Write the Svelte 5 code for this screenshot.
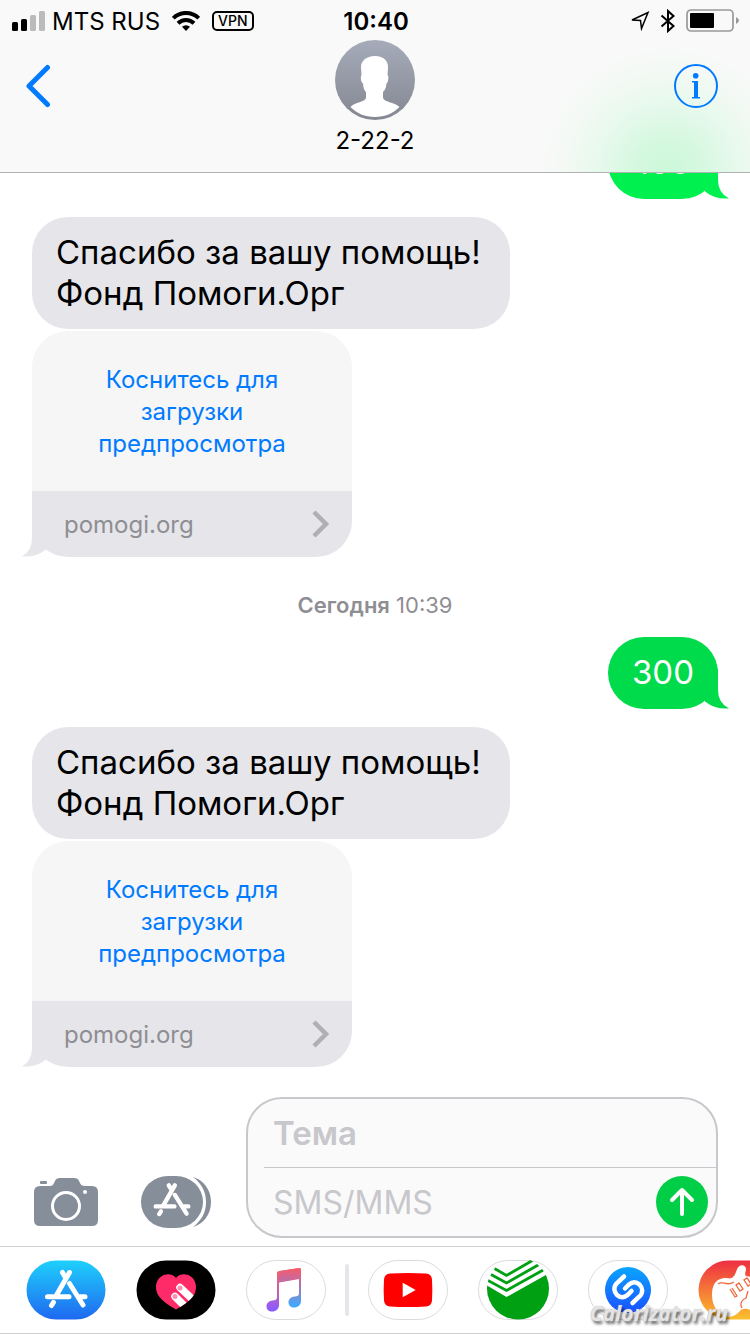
<script>
	const thread = [
		{ type: 'sent', text: '100', bright: true },
		{ type: 'received', text: 'Спасибо за вашу помощь! Фонд Помоги.Орг' },
		{ type: 'link', host: 'pomogi.org' },
		{ type: 'time', day: 'Сегодня', time: '10:39' },
		{ type: 'sent', text: '300' },
		{ type: 'received', text: 'Спасибо за вашу помощь! Фонд Помоги.Орг' },
		{ type: 'link', host: 'pomogi.org' }
	];

	let subject = $state('');
	let message = $state('');
</script>

{#snippet storeGlyph()}
	<g fill="none" stroke="#fff" stroke-width="5" stroke-linecap="round">
		<path d="M36.5 12.500l3 5M43.500 23.500L57 45M43.500 12.500L30 36M21.500 36.700H43M53 36.700h6M27.500 42.300L25.500 45.500" />
	</g>
{/snippet}

<div class="phone">
	<header>
		<div class="status">
			<div class="status-side">
				<svg width="34" height="20" viewBox="0 0 34 20" aria-hidden="true">
					<rect x="0" y="11" width="6" height="9" rx="1.500" />
					<rect x="9" y="8" width="6" height="12" rx="1.500" />
					<rect x="18" y="4" width="6" height="16" rx="1.500" fill="#bbb" />
					<rect x="27" y="0" width="6" height="20" rx="1.500" fill="#bbb" />
				</svg>
				<span class="carrier">MTS RUS</span>
				<svg width="28" height="20" viewBox="0 0 28 20" aria-hidden="true">
					<g fill="none" stroke="#000" stroke-width="4">
						<path d="M1.300 7.200a18 18 0 0 1 25.400 0" />
						<path d="M6 12.200a11.500 11.500 0 0 1 16 0" />
					</g>
					<path d="M14 20l-4-4.200a6 6 0 0 1 8 0z" />
				</svg>
				<span class="vpn">VPN</span>
			</div>
			<strong class="clock">10:40</strong>
			<div class="status-side right">
				<svg width="20" height="20" viewBox="0 0 20 20" aria-hidden="true">
					<path d="M2 9L18 1.500 11.500 17.500 10.500 9.500z" fill="none" stroke="#000" stroke-width="1.500" />
				</svg>
				<svg width="16" height="24" viewBox="0 0 16 24" aria-hidden="true">
					<path d="M1.500 6.500L13.500 17 8 22V2l5.500 5L1.500 17.500" fill="none" stroke="#000" stroke-width="2" />
				</svg>
				<svg width="54" height="24" viewBox="0 0 54 24" aria-hidden="true">
					<rect x="1" y="1" width="46" height="21" rx="4" fill="none" stroke="#999" stroke-width="1.700" />
					<rect x="4" y="4" width="24" height="15" rx="1" />
					<path d="M50 8q6 3.500 0 7z" fill="#999" />
				</svg>
			</div>
		</div>

		<div class="nav">
			<button class="icon-button" aria-label="Назад">
				<svg width="30" height="44" viewBox="0 0 30 44">
					<path d="M21.500 3.500L3 22 21.500 40.500" fill="none" stroke="#007aff" stroke-width="5" stroke-linecap="round" stroke-linejoin="round" />
				</svg>
			</button>
			<div class="contact">
				<svg width="80" height="80" viewBox="0 0 80 80" aria-hidden="true">
					<defs>
						<linearGradient id="avatar" x2="0" y2="1">
							<stop stop-color="#a5abb9" />
							<stop offset="1" stop-color="#858892" />
						</linearGradient>
					</defs>
					<circle cx="40" cy="40" r="40" fill="url(#avatar)" />
					<path
						d="M40 16C31 16 26 21 26 27L26.500 35C25.500 36 25.500 42 28 43.500C28.500 48 29 50 31 52V58C30 62 20 62 15.500 67C22 73.500 30 77 40 77S58 73.500 64.500 67C59 62 49 62 48 58V52C50 50 51 48 51.500 43.500C53.500 42 54 36 52.500 35L53 27C53 21 49 16 40 16z"
						fill="#fff"
					/>
				</svg>
				<span class="name">2-22-2</span>
			</div>
			<button class="icon-button" aria-label="Сведения">
				<svg width="44" height="44" viewBox="0 0 44 44">
					<circle cx="22" cy="22" r="21" fill="none" stroke="#007aff" stroke-width="2" />
					<circle cx="21.700" cy="11.800" r="2.800" fill="#007aff" />
					<path d="M18 17h6v16h2v1.500h-8V33h2V18.500h-2z" fill="#007aff" />
				</svg>
			</button>
		</div>
	</header>

	<main>
		{#each thread as item}
			{#if item.type === 'time'}
				<p class="time"><strong>{item.day}</strong> {item.time}</p>
			{:else if item.type === 'link'}
				<a class="card" href="https://pomogi.org">
					<span class="preview">Коснитесь для загрузки предпросмотра</span>
					<span class="host">
						{item.host}
						<svg width="18" height="28" viewBox="0 0 18 28" aria-hidden="true">
							<path d="M3 2l12 12L3 26" fill="none" stroke="#b0b0b4" stroke-width="4.500" />
						</svg>
					</span>
					<svg class="tail left" width="30" height="40" viewBox="0 0 30 40" aria-hidden="true">
						<path d="M10 0v21q0 13-10 18.500 14 1 24-7L30 0z" fill="#e5e5ea" />
					</svg>
				</a>
			{:else}
				<p class="bubble {item.type}" class:bright={item.bright}>
					{item.text}
					{#if item.type === 'sent'}
						<svg class="tail" width="30" height="40" viewBox="0 0 30 40" aria-hidden="true">
							<path d="M19 0v21q0 13 11 18.500-14 1-24-7L5 0z" fill="currentColor" />
						</svg>
					{/if}
				</p>
			{/if}
		{/each}
	</main>

	<form class="composer" onsubmit={(e) => e.preventDefault()}>
		<button type="button" class="icon-button" aria-label="Камера">
			<svg width="64" height="52" viewBox="0 0 64 52">
				<path
					d="M6 10h10q3 0 4-3l1-2q1-3 5-3h14q4 0 5 3l1 2q1 3 5 3h7q6 0 6 6v28q0 6-6 6H6q-6 0-6-6V16q0-6 6-6z"
					fill="#868e99"
				/>
				<rect x="6" y="5" width="7" height="3" rx="1" fill="#868e99" />
				<circle cx="32" cy="30" r="13.500" fill="none" stroke="#fff" stroke-width="3" />
				<circle cx="51" cy="16" r="2" fill="#fff" />
			</svg>
		</button>
		<button type="button" class="icon-button" aria-label="Приложения">
			<svg width="70" height="52" viewBox="0 0 70 52">
				<path d="M52 1c10 3 18 12 18 25s-8 22-18 25c8-6 13-14 13-25S60 7 52 1z" fill="#868e99" />
				<rect width="62" height="52" rx="27" fill="#868e99" />
				<g transform="translate(-4 -1.500) scale(.87)">{@render storeGlyph()}</g>
			</svg>
		</button>
		<div class="fields">
			<input class="subject" aria-label="Тема" placeholder="Тема" bind:value={subject} />
			<div class="message">
				<input aria-label="SMS/MMS" placeholder="SMS/MMS" bind:value={message} />
				<button class="icon-button" aria-label="Отправить">
					<svg width="52" height="52" viewBox="0 0 52 52">
						<circle cx="26" cy="26" r="26" fill="#00ce46" />
						<path d="M26 38V14M16 24l10-10 10 10" fill="none" stroke="#fff" stroke-width="4" stroke-linecap="round" stroke-linejoin="round" />
					</svg>
				</button>
			</div>
		</div>
	</form>

	<nav class="apps" aria-label="Приложения iMessage">
		<button class="icon-button" aria-label="App Store">
			<svg width="80" height="60" viewBox="0 0 80 60">
				<defs>
					<linearGradient id="store" x2="0" y2="1">
						<stop stop-color="#1ed0fc" />
						<stop offset="1" stop-color="#1f68f0" />
					</linearGradient>
				</defs>
				<rect x=".5" y=".5" width="79" height="59" rx="29.500" fill="url(#store)" />
				{@render storeGlyph()}
			</svg>
		</button>
		<button class="icon-button" aria-label="Digital Touch">
			<svg width="80" height="60" viewBox="0 0 80 60">
				<defs>
					<clipPath id="heart">
						<path d="M40 18C36 13 29 14 26 16c-5 3-7 9-5.500 15C22 39 34 46 40 49.500 46 46 58 39 59.500 31 61 25 59 19 54 16c-3-2-10-3-14 2z" />
					</clipPath>
				</defs>
				<rect x=".5" y=".5" width="79" height="59" rx="29.500" />
				<g clip-path="url(#heart)">
					<rect x="18" y="12" width="44" height="40" fill="#ff2a68" />
					<path d="M44 27.500l18 17M39 36.500l14 14" stroke="#fff" stroke-width="7.500" stroke-linecap="round" />
					<circle cx="44" cy="28" r="2.500" fill="#ff8fae" />
					<circle cx="39" cy="36.500" r="2.500" fill="#ff8fae" />
				</g>
			</svg>
		</button>
		<button class="icon-button" aria-label="Музыка">
			<svg width="80" height="60" viewBox="0 0 80 60">
				<defs>
					<linearGradient id="note-left" gradientUnits="userSpaceOnUse" x1="30" y1="10" x2="27" y2="50">
						<stop stop-color="#fd5b65" />
						<stop offset=".3" stop-color="#df6090" />
						<stop offset="1" stop-color="#8a5cff" />
					</linearGradient>
					<linearGradient id="note-right" gradientUnits="userSpaceOnUse" x1="52" y1="8" x2="50" y2="46">
						<stop stop-color="#fb5b66" />
						<stop offset=".3" stop-color="#c76a9c" />
						<stop offset="1" stop-color="#3fa9ff" />
					</linearGradient>
				</defs>
				<rect class="pill" x=".5" y=".5" width="79" height="59" rx="29.500" />
				<path d="M31 13q0-1.500 1.500-1.800L53 8v11L33 22.500V45c0 4-3 6.500-7 6.500-3 0-5.500-2-5.500-5 0-4 3-5.500 6-6 3-.5 4.500-.8 4.500-3z" fill="url(#note-left)" />
				<path d="M33 11.100L53.500 8q1.500-.2 1.500 1.300V41c0 4-3 6.500-7 6.500-3 0-5.500-2-5.500-5 0-4 3-5.500 6-6 3-.5 4.500-.8 4.500-3v-15L33 22.200z" fill="url(#note-right)" />
			</svg>
		</button>
		<span class="divider"></span>
		<button class="icon-button" aria-label="YouTube">
			<svg width="80" height="60" viewBox="0 0 80 60">
				<rect class="pill" x=".5" y=".5" width="79" height="59" rx="29.500" />
				<path d="M22 13.500q18-1 36 0 5.500.5 6 6 .7 10.500 0 21-.5 5.500-6 6-18 1-36 0-5.500-.5-6-6-.7-10.500 0-21 .5-5.500 6-6z" fill="#f00" />
				<path d="M34.700 22.700v14.600l13-7.300z" fill="#fff" />
			</svg>
		</button>
		<button class="icon-button" aria-label="Сбербанк">
			<svg width="80" height="60" viewBox="0 0 80 60">
				<defs>
					<clipPath id="sber"><path d="M9 1h62v57H9z" clip-path="url(#sber-disc)" /></clipPath>
					<clipPath id="sber-disc"><circle cx="40" cy="28.500" r="31" /></clipPath>
				</defs>
				<rect class="pill" x=".5" y=".5" width="79" height="59" rx="29.500" />
				<g clip-path="url(#sber-disc)">
					<path d="M5 23l23.500 14L75 11v55H5z" fill="#00a013" />
					<path d="M16.500 8.500l12 7L57-1M13 14.500l15.500 8.500L61 4.500M9 20l19.500 10.500L67 9" fill="none" stroke="#00a013" stroke-width="2.800" />
				</g>
			</svg>
		</button>
		<button class="icon-button" aria-label="Shazam">
			<svg width="80" height="60" viewBox="0 0 80 60">
				<defs>
					<linearGradient id="shazam" x2="0" y2="1">
						<stop stop-color="#0aa5ff" />
						<stop offset="1" stop-color="#1a50ff" />
					</linearGradient>
				</defs>
				<rect class="pill" x=".5" y=".5" width="79" height="59" rx="29.500" />
				<circle cx="40" cy="30" r="23" fill="url(#shazam)" />
				<path d="M36 16.500l-7 6.500c-4 4-3 9 0 12 3.500 3 7.500 2.500 10.500 0l4-4M44.500 43l7-6.500c4-4 3-9 0-12-3.500-3-7.500-2.500-10.500 0l-4 4" fill="none" stroke="#fff" stroke-width="4.500" stroke-linecap="round" />
			</svg>
		</button>
		<button class="icon-button" aria-label="GarageBand">
			<svg width="80" height="60" viewBox="0 0 80 60">
				<defs>
					<linearGradient id="band" x2="0" y2="1">
						<stop stop-color="#ee2e42" />
						<stop offset="1" stop-color="#fbc02d" />
					</linearGradient>
				</defs>
				<rect x=".5" y=".5" width="79" height="59" rx="29.500" fill="url(#band)" />
				<path d="M14 35C14 26 17 20 24 18.500C30 17 32 20 35 17C38 15 38 9 41 6.500C44 4 48 6 48 9C48 12 46 14 48 16L60 18V54C50 47 44 48 41 52C37 56 32 58 27 56C19 53 14 45 14 35z" fill="#fff" />
				<path d="M20 24c5-4 8 3 16-2M32 29l5 8 2-1-5-8M38 25l4 6 3-2-4-6zM46 20l4 6 3-2-4-6zM44 48c-3-5 1-9 4-10l2-7" fill="none" stroke="#f0693c" stroke-width="1.300" />
			</svg>
		</button>
		<span class="watermark">Calorizator.ru</span>
	</nav>
</div>

<style>
	:global(body) {
		background: #fff;
	}

	.phone {
		display: flex;
		flex-direction: column;
		height: 100vh;
		overflow: hidden;
		font-family: Inter, 'Liberation Sans', sans-serif;
		color: #000;
	}

	svg {
		display: block;
		flex: none;
	}

	.icon-button {
		flex: none;
		padding: 0;
		border: 0;
		background: none;
		cursor: pointer;
	}

	header {
		flex: none;
		box-sizing: border-box;
		height: 173px;
		border-bottom: 1px solid #b2b2b2;
		background: radial-gradient(circle 130px at 89% 100%, #ccf8d9, #d5f8df 25%, #e8f9ed 55%, #f4f9f5 80%, #f9f9f9);
	}

	.status {
		display: grid;
		grid-template-columns: 1fr auto 1fr;
		align-items: center;
		box-sizing: border-box;
		height: 40px;
		padding: 2px 10px 0 12px;
	}

	.status-side {
		display: flex;
		align-items: center;
	}

	.status-side.right {
		justify-content: flex-end;
		gap: 10px;
	}

	.carrier {
		margin: 0 12px 0 6px;
		font-size: 24px;
	}

	.vpn {
		margin-left: 12px;
		padding: 0 4px;
		border: 2px solid #000;
		border-radius: 5px;
		font-size: 14px;
		font-weight: 500;
		line-height: 16px;
	}

	.clock {
		font-size: 24px;
		font-weight: 600;
	}

	.nav {
		display: grid;
		grid-template-columns: 1fr auto 1fr;
		align-items: start;
		padding: 0 32px 0 26px;
	}

	.nav .icon-button {
		justify-self: start;
		margin-top: 24px;
	}

	.nav .icon-button:last-child {
		justify-self: end;
	}

	.contact {
		display: flex;
		flex-direction: column;
		align-items: center;
		margin-left: 6px;
	}

	.name {
		font-size: 24px;
		line-height: 42px;
	}

	main {
		display: flex;
		flex: 1 1 0;
		flex-direction: column;
		justify-content: flex-end;
		align-items: flex-start;
		min-height: 0;
		padding: 0 32px 30px;
		overflow: hidden;
	}

	p {
		margin: 0;
	}

	.bubble {
		position: relative;
		flex: none;
		box-sizing: border-box;
		max-width: 478px;
		padding: 15px 24px;
		border-radius: 36px;
		font-size: 33px;
		line-height: 41px;
	}

	.received {
		margin: 18px 0 2px;
		background: #e5e5ea;
	}

	.sent {
		align-self: flex-end;
		min-width: 110px;
		min-height: 72px;
		background: #00db4b;
		color: #fff;
		text-align: center;
	}

	.sent .tail {
		color: #00db4b;
	}

	.sent.bright {
		background: #00f050;
	}

	.bright .tail {
		color: #00f050;
	}

	.tail {
		position: absolute;
		right: -11px;
		bottom: 0;
		z-index: -1;
	}

	.tail.left {
		right: auto;
		left: -10px;
	}

	.card {
		position: relative;
		flex: none;
		width: 320px;
		text-decoration: none;
	}

	.preview {
		display: block;
		box-sizing: border-box;
		height: 160px;
		padding: 33px 60px;
		border-radius: 36px 36px 0 0;
		background: #f6f6f6;
		color: #007aff;
		font-size: 24px;
		line-height: 32px;
		text-align: center;
	}

	.host {
		display: flex;
		justify-content: space-between;
		align-items: center;
		height: 66px;
		padding: 0 23px 0 32px;
		border-radius: 0 0 36px 36px;
		background: #e5e5ea;
		color: #8e8e93;
		font-size: 24px;
	}

	.time {
		flex: none;
		align-self: center;
		padding: 32px 0 16px;
		color: #8e8e93;
		font-size: 22px;
		line-height: 32px;
	}

	.time strong {
		font-weight: 600;
	}

	.composer {
		display: flex;
		flex: none;
		align-items: flex-end;
		padding: 0 32px 8px 34px;
	}

	.composer > .icon-button {
		margin: 0 43px 10px 0;
	}

	.composer > .icon-button + .icon-button {
		margin-right: 35px;
	}

	.fields {
		flex: 1;
		box-sizing: border-box;
		min-width: 0;
		padding-left: 16px;
		border: 2px solid #c7c7cc;
		border-radius: 36px;
		background: #fafafa;
	}

	input {
		box-sizing: border-box;
		width: 100%;
		min-width: 0;
		height: 68px;
		padding: 0 9px;
		border: 0;
		outline: 0;
		background: none;
		font: inherit;
		font-size: 32px;
	}

	input::placeholder {
		color: #c7c7cc;
		opacity: 1;
	}

	.subject {
		display: block;
		font-size: 33px;
		font-weight: 600;
	}

	.message {
		display: flex;
		align-items: center;
		padding-right: 8px;
		border-top: 1px solid #c7c7cc;
	}

	.apps {
		position: relative;
		display: flex;
		flex: none;
		align-items: center;
		gap: 30px;
		height: 86px;
		padding-left: 26px;
		border-top: 1px solid #d1d1d4;
		border-bottom: 1px solid #d1d1d4;
		overflow: hidden;
	}

	.pill {
		fill: #fff;
		stroke: #dcdcdf;
	}

	.divider {
		flex: none;
		width: 4px;
		height: 52px;
		margin: 0 -11px;
		border-radius: 2px;
		background: #e5e5ea;
	}

	.watermark {
		position: absolute;
		right: 22px;
		bottom: 7px;
		color: #e4e4e4;
		font-family: 'Open Sans', sans-serif;
		font-size: 21px;
		font-style: italic;
		font-weight: 700;
		line-height: 26px;
		text-shadow: 0 0 1px #aaa, 2px 3px 3px rgba(0, 0, 0, 0.6);
	}
</style>
